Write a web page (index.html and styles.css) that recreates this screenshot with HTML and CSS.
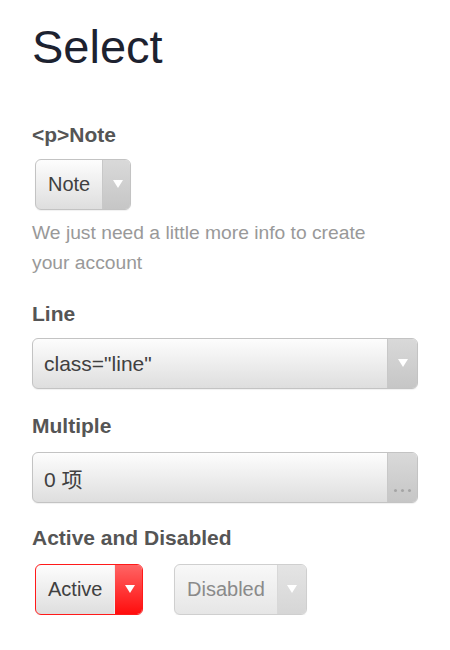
FILE: index.html
```html
<!DOCTYPE html>
<html>
<head>
<meta charset="utf-8">
<link rel="stylesheet" href="styles.css">
</head>
<body>
<div class="page">
  <h1 class="title">Select</h1>

  <div class="label label-first">&lt;p&gt;Note</div>
  <div class="row">
    <div class="select inline">
      <span class="value">Note</span>
      <span class="btn"><span class="tri"></span></span>
    </div>
  </div>
  <p class="hint">We just need a little more info to create your account</p>

  <div class="label">Line</div>
  <div class="select block">
    <span class="value">class="line"</span>
    <span class="btn"><span class="tri"></span></span>
  </div>

  <div class="label label-multi">Multiple</div>
  <div class="select block multi">
    <span class="value">0 项</span>
    <span class="btn"><span class="dots"><i></i><i></i><i></i></span></span>
  </div>

  <div class="label label-ad">Active and Disabled</div>
  <div class="row pair">
    <div class="select inline active">
      <span class="value">Active</span>
      <span class="btn"><span class="tri"></span></span>
    </div>
    <div class="select inline disabled">
      <span class="value">Disabled</span>
      <span class="btn"><span class="tri"></span></span>
    </div>
  </div>
</div>
</body>
</html>
```
FILE: styles.css
```css
html, body {
  margin: 0;
  padding: 0;
  background: #fff;
}
body {
  font-family: "Liberation Sans", Arial, "Noto Sans CJK SC", sans-serif;
}
.page {
  padding: 20px 32px 0 32px;
}
.title {
  margin: 0;
  font-size: 47px;
  line-height: 54px;
  font-weight: normal;
  color: #1d2230;
}
.label {
  font-size: 21px;
  line-height: 24px;
  font-weight: bold;
  color: #555;
  margin-top: 24px;
}
.label-first {
  margin-top: 49px;
}
.label-multi {
  margin-top: 25px;
}
.label-ad {
  margin-top: 23px;
}
.row {
  display: flex;
  margin-top: 12px;
  padding-left: 3px;
}
.pair {
  gap: 31px;
  margin-top: 14px;
}
.select {
  box-sizing: border-box;
  height: 51px;
  display: flex;
  align-items: stretch;
  border: 1px solid #c3c3c3;
  border-radius: 6px;
  overflow: hidden;
  background: linear-gradient(#fdfdfd, #dedede);
  box-shadow: 0 1px 1px rgba(0,0,0,0.06);
}
.select.block {
  margin-top: 12px;
  width: 386px;
}
.select.multi {
  margin-top: 14px;
}
.value {
  flex: 1;
  display: flex;
  align-items: center;
  padding: 0 14px 0 11px;
  font-size: 20px;
  color: #404040;
  white-space: nowrap;
}
.block .value {
  font-size: 21px;
}
.inline .value {
  padding: 0 12px 0 12px;
}
.btn {
  width: 29px;
  flex: none;
  position: relative;
  display: flex;
  align-items: center;
  justify-content: center;
  border-left: 1px solid #c8c8c8;
  background: linear-gradient(#d9d9d9, #c6c6c6);
}
.tri {
  width: 0;
  height: 0;
  border-left: 5px solid transparent;
  border-right: 5px solid transparent;
  border-top: 8px solid #fff;
  margin-top: -2px;
}
.dots {
  position: absolute;
  bottom: 10px;
  left: 6px;
  display: flex;
  gap: 4px;
}
.dots i {
  width: 3px;
  height: 3px;
  border-radius: 50%;
  background: #a5a5a5;
}
.active {
  border-color: #ff1a1a;
  width: 108px;
}
.active .btn {
  border-left: 1px solid #f0f0f0;
  background: linear-gradient(#ff6464, #ff0d0d);
}
.disabled {
  width: 133px;
  border-color: #cfcfcf;
  background: linear-gradient(#f8f8f8, #e6e6e6);
}
.disabled .value {
  color: #8a8a8a;
}
.disabled .btn {
  border-left-color: #d8d8d8;
  background: linear-gradient(#e4e4e4, #d6d6d6);
}
.inline:first-child:not(.active) {
  width: 96px;
}
.hint {
  margin: 8px 0 0 0;
  font-size: 19.25px;
  line-height: 30px;
  color: #999;
  width: 360px;
}
```
